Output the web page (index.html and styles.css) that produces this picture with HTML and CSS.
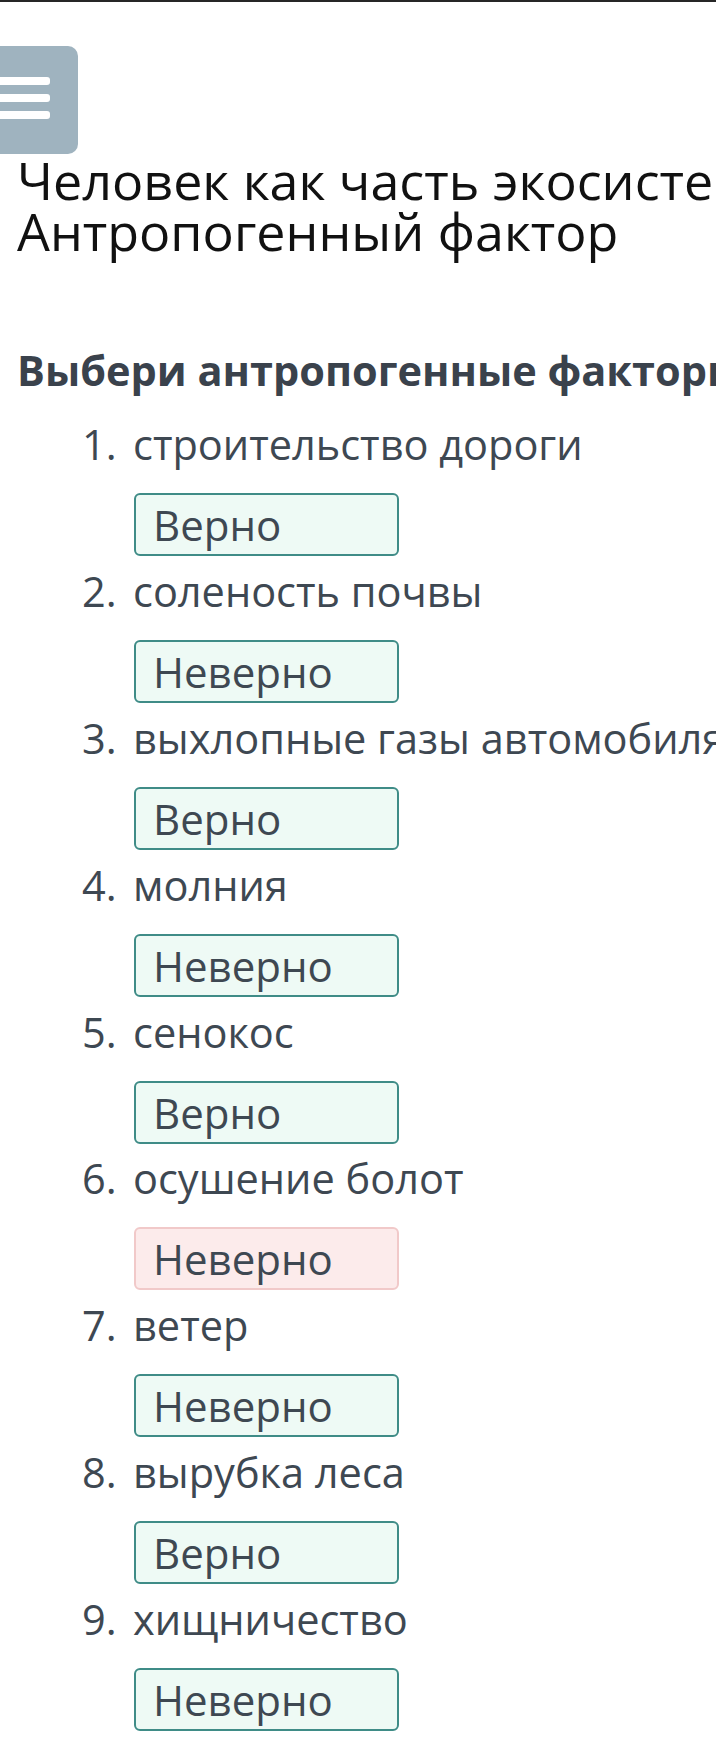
FILE: index.html
```html
<!DOCTYPE html>
<html lang="ru">
<head>
<meta charset="utf-8">
<link rel="stylesheet" href="styles.css">
</head>
<body>
<div class="page">
  <div class="menu">
    <span class="bar"></span>
    <span class="bar"></span>
    <span class="bar"></span>
  </div>
  <h1 class="title">Человек как часть экосистемы. Антропогенный фактор</h1>
  <h2 class="question">Выбери антропогенные факторы.</h2>
  <ol class="items">
    <li class="item"><div class="line"><span class="num">1.</span><span class="text">строительство дороги</span></div><div class="answer ok">Верно</div></li>
    <li class="item"><div class="line"><span class="num">2.</span><span class="text">соленость почвы</span></div><div class="answer ok">Неверно</div></li>
    <li class="item"><div class="line"><span class="num">3.</span><span class="text">выхлопные газы автомобиля</span></div><div class="answer ok">Верно</div></li>
    <li class="item"><div class="line"><span class="num">4.</span><span class="text">молния</span></div><div class="answer ok">Неверно</div></li>
    <li class="item"><div class="line"><span class="num">5.</span><span class="text">сенокос</span></div><div class="answer ok">Верно</div></li>
    <li class="item"><div class="line"><span class="num">6.</span><span class="text">осушение болот</span></div><div class="answer bad">Неверно</div></li>
    <li class="item"><div class="line"><span class="num">7.</span><span class="text">ветер</span></div><div class="answer ok">Неверно</div></li>
    <li class="item"><div class="line"><span class="num">8.</span><span class="text">вырубка леса</span></div><div class="answer ok">Верно</div></li>
    <li class="item"><div class="line"><span class="num">9.</span><span class="text">хищничество</span></div><div class="answer ok">Неверно</div></li>
  </ol>
</div>
</body>
</html>
```

FILE: styles.css
```css
html, body {
  margin: 0;
  padding: 0;
  background: #ffffff;
}
body {
  font-family: "Open Sans", "Noto Sans", sans-serif;
  overflow: hidden;
  width: 716px;
}
.page {
  border-top: 2px solid #262626;
  padding-top: 44px;
  white-space: nowrap;
}
.menu {
  width: 108px;
  height: 108px;
  margin-left: -30px;
  background: #9fb3bf;
  border-radius: 10px;
  display: flex;
  flex-direction: column;
  justify-content: flex-start;
  padding-top: 31px;
  box-sizing: border-box;
  gap: 9px;
}
.bar {
  display: block;
  width: 80px;
  height: 8px;
  background: #ffffff;
  border-radius: 3px;
}
.title {
  margin: 0;
  padding-left: 17px;
  font-size: 52px;
  line-height: 51px;
  font-weight: 400;
  color: #111111;
  white-space: normal;
  width: 930px;
}
.question {
  margin: 0;
  margin-top: 89px;
  padding-left: 17px;
  font-size: 41.5px;
  line-height: 50px;
  font-weight: 700;
  color: #3a424c;
}
.items {
  list-style: none;
  margin: 0;
  margin-top: 24px;
  padding: 0;
}
.item {
  margin-bottom: 9.875px;
}
.line {
  display: flex;
  font-size: 41.5px;
  line-height: 50px;
  color: #3e4852;
}
.num {
  width: 51px;
  padding-left: 82px;
  flex: none;
}
.answer {
  margin-top: 24px;
  margin-left: 134px;
  width: 265px;
  height: 63px;
  box-sizing: border-box;
  border: 2px solid #3f8c87;
  border-radius: 6px;
  background: #eefaf5;
  padding-left: 17px;
  font-size: 42px;
  line-height: 59px;
  color: #3e4852;
}
.answer.bad {
  border-color: #f1c9c9;
  background: #fcebeb;
}
```
